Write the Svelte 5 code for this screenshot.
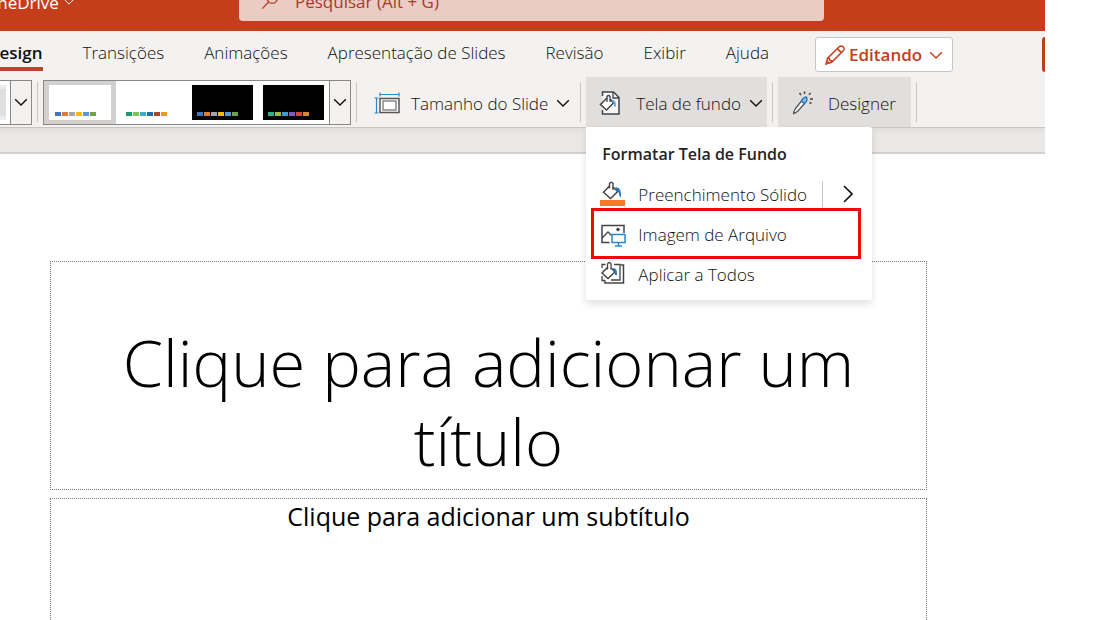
<script lang="ts">
  const tabs = ['Design', 'Transições', 'Animações', 'Apresentação de Slides', 'Revisão', 'Exibir', 'Ajuda'];

  interface Variation {
    name: string;
    dark: boolean;
    colors: string[];
  }

  const office = ['#4472c4', '#e17a35', '#a5a5a5', '#f5b911', '#5b9bd5', '#70a347'];

  const variations: Variation[] = [
    { name: 'Variante 1', dark: false, colors: office },
    { name: 'Variante 2', dark: false, colors: ['#149b6e', '#7fc44a', '#38aecb', '#1d6fa8', '#ab4523', '#ec9c1c'] },
    { name: 'Variante 3', dark: true, colors: office },
    { name: 'Variante 4', dark: true, colors: ['#2bb38a', '#9dbb45', '#3d9cd6', '#7d5cbd', '#c8502c', '#d98a2b'] },
  ];

  let activeTab = $state('Design');
  let selected = $state(0);
  let menuOpen = $state(true);
</script>

{#snippet chevron()}
  <svg class="chevron" viewBox="0 0 14 8" aria-hidden="true">
    <path d="M1.2 1.2 7 7l5.8-5.8" fill="none" stroke="currentColor" stroke-width="1.4" />
  </svg>
{/snippet}

<div class="app">
  <header class="topbar">
    <button class="location" type="button">OneDrive {@render chevron()}</button>
    <label class="search">
      <svg class="search__icon" viewBox="0 0 20 20" aria-hidden="true">
        <circle cx="12.5" cy="7" r="5.6" />
        <path d="M8.5 11.2 1.5 18.5" />
      </svg>
      <input type="text" placeholder="Pesquisar (Alt + G)" aria-label="Pesquisar" />
    </label>
  </header>

  <nav class="tabs">
    {#each tabs as tab}
      <button class="tab" class:tab--active={tab === activeTab} type="button" onclick={() => (activeTab = tab)}>
        {tab}
      </button>
    {/each}
    <button class="editing" type="button">
      <svg class="editing__icon" viewBox="0 0 20 20" aria-hidden="true">
        <path d="M1 19 2.6 13.2 14.2 1.8a2.6 2.6 0 0 1 4 4L6.6 17.3Z" />
        <path d="M12.4 3.6 16.4 7.6M2.6 13.2l1.8.3.4 1.9 1.8.3V17.3M2 16l2 2" />
      </svg>
      Editando
      {@render chevron()}
    </button>
    <button class="share" type="button" aria-label="Compartilhar"></button>
  </nav>

  <div class="toolbar">
    <div class="gallery gallery--themes">
      <button class="theme" type="button" aria-label="Tema"><span></span></button>
      <button class="gallery__more" type="button" aria-label="Mais temas">{@render chevron()}</button>
    </div>
    <span class="separator"></span>
    <div class="gallery">
      {#each variations as variation, i}
        <button
          class="variation"
          class:variation--selected={i === selected}
          class:variation--dark={variation.dark}
          type="button"
          aria-label={variation.name}
          onclick={() => (selected = i)}
        >
          <span class="variation__slide">
            {#each variation.colors as color}
              <i style="background: {color}"></i>
            {/each}
          </span>
        </button>
      {/each}
      <button class="gallery__more" type="button" aria-label="Mais variantes">{@render chevron()}</button>
    </div>
    <span class="separator"></span>
    <button class="tool tool--size" type="button">
      <svg class="tool__icon tool__icon--wide" viewBox="0 0 26 22" aria-hidden="true" fill="none">
        <path d="M6 .5v4M25 .5v4M6 2.5h19M.5 6h4M.5 21h4M2.5 6v15" stroke="#2b88c8" stroke-width="1.2" />
        <rect x="6" y="6.5" width="19" height="14" fill="#fff" stroke="#555" stroke-width="1.5" />
        <rect x="9" y="9" width="13" height="9" stroke="#888" stroke-width="1.5" />
      </svg>
      Tamanho do Slide
      {@render chevron()}
    </button>
    <span class="separator"></span>
    <div class="dropdown">
      <button
        class="tool tool--background"
        type="button"
        aria-expanded={menuOpen}
        onclick={() => (menuOpen = !menuOpen)}
      >
        <svg class="tool__icon" viewBox="0 0 22 24" aria-hidden="true" fill="none">
          <path d="M3.5 5V1h11L20 6.5V23H3.5v-4" fill="#f7f7f7" stroke="#444" stroke-width="1.5" />
          <path d="M14 1v6h6" stroke="#444" stroke-width="1.3" />
          <path d="M8 7 1.5 13.5l6 5.5L14.5 12 11 8" fill="#fff" stroke="#444" stroke-width="1.5" />
          <path d="M8 11V5.5q1.5-2 3 0V11" stroke="#444" stroke-width="1.3" />
          <path d="M13 9.5q3.5.5 3 6" stroke="#69afe5" stroke-width="2" />
        </svg>
        Tela de fundo
        {@render chevron()}
      </button>
      {#if menuOpen}
        <div class="menu">
          <h2>Formatar Tela de Fundo</h2>
          <div class="menu__row">
            <button class="menu__item" type="button">
              <svg viewBox="0 0 26 26" aria-hidden="true" fill="none">
                <path d="M0 19h25v6H0z" fill="#ed7d31" />
                <path d="M9.5 5 3.5 11.2l7 6.3 7.2-7L13 6" fill="#fff" stroke="#444" stroke-width="1.5" />
                <path d="M9.5 7.5v-5q1.7-2.6 3.5 0V9" stroke="#444" stroke-width="1.4" />
                <path d="M15 6.5q6.5-1.5 6 10-2-1-2-3.5t-2.5-4Z" fill="#2878bd" />
              </svg>
              Preenchimento Sólido
            </button>
            <button class="menu__expand" type="button" aria-label="Mais cores">
              <svg viewBox="0 0 10 18" aria-hidden="true">
                <path d="m1 1 8 8-8 8" fill="none" stroke="currentColor" stroke-width="1.6" />
              </svg>
            </button>
          </div>
          <div class="menu__row menu__row--marked">
            <button class="menu__item" type="button">
              <svg viewBox="0 0 26 26" aria-hidden="true" fill="none">
                <path d="M9.5 21.5H2v-17h22V12" stroke="#444" stroke-width="1.5" />
                <path d="m2 17 6-6 3.5 3.5" stroke="#444" stroke-width="1.4" />
                <circle cx="18" cy="8.5" r="1.7" fill="#444" />
                <path d="M12 13.5h13v8H12zM18.5 21.5v3M15 25h7" fill="#fff" stroke="#2b88c8" stroke-width="1.5" />
              </svg>
              Imagem de Arquivo
            </button>
          </div>
          <div class="menu__row">
            <button class="menu__item" type="button">
              <svg viewBox="0 0 26 26" aria-hidden="true" fill="none">
                <path d="M2 7V3.5h3.5M14 3.5h6V19h-9M2 15v4.5h3" stroke="#444" stroke-width="1.3" />
                <path d="M20.5 4h3v18H5v-2.5" stroke="#444" stroke-width="1.5" />
                <path d="M8 6 2 12l6 5.5 7-6.5-4-4" fill="#fff" stroke="#444" stroke-width="1.5" />
                <path d="M7.500 8.500V3q1.800-3 3.600 0v5.500" stroke="#444" stroke-width="1.3" />
                <path d="M13 8q3.500 0 3 6" stroke="#2878bd" stroke-width="2" />
              </svg>
              Aplicar a Todos
            </button>
          </div>
        </div>
      {/if}
    </div>
    <span class="separator"></span>
    <button class="tool tool--designer" type="button">
      <svg class="tool__icon" viewBox="0 0 22 24" aria-hidden="true" fill="none">
        <path d="M1.5 22.5q0-2 2-5l6-7.5 3 2.5L6 20q-2.500 2-4.500 2.500Z" fill="#fff" stroke="#555" stroke-width="1.3" />
        <path d="M9.5 10q1-3.500 5-4 1.500 4-2 6.500Z" fill="#83beec" stroke="#2878bd" stroke-width="1.4" />
        <path d="M12.5.5V3M7.500 2 9 4M18.500 2 17 3.800M18 8h3M17.500 11.500l2 1" stroke="#444" stroke-width="1.5" />
      </svg>
      Designer
    </button>
    <span class="separator"></span>
  </div>

  <div class="gutter"></div>

  <main class="slide">
    <h1 class="placeholder placeholder--title">Clique para adicionar um título</h1>
    <p class="placeholder placeholder--subtitle">Clique para adicionar um subtítulo</p>
  </main>
</div>

<style>
  :global(body) {
    margin: 0;
    background: #fff;
  }

  .app {
    display: flex;
    flex-direction: column;
    box-sizing: border-box;
    height: 100vh;
    padding-right: 5%;
    overflow: hidden;
    font-family: 'Open Sans', 'Noto Sans', sans-serif;
    font-size: 17px;
    font-weight: 300;
    color: #11100f;
  }

  button {
    display: flex;
    align-items: center;
    box-sizing: border-box;
    flex: none;
    margin: 0;
    padding: 0;
    border: 0;
    background: none;
    color: inherit;
    font: inherit;
    white-space: nowrap;
    cursor: pointer;
  }

  svg {
    display: block;
    flex: none;
  }

  .chevron {
    width: 14px;
    height: 8px;
  }

  /* Top bar */
  .topbar {
    display: flex;
    align-items: flex-end;
    flex: none;
    height: 31px;
    background: #c43e1c;
  }

  .location {
    gap: 5px;
    width: 239px;
    height: 42px;
    margin-bottom: 8px;
    margin-left: -16px;
    color: #fff;
    font-weight: 400;
  }

  .location .chevron {
    width: 10px;
  }

  .search {
    display: flex;
    align-items: center;
    gap: 16px;
    box-sizing: border-box;
    width: 56%;
    height: 40px;
    margin-bottom: 10px;
    margin-left: 16px;
    padding: 0 22px;
    border-radius: 4px;
    background: #eaccc5;
  }

  .search__icon {
    width: 18px;
    height: 18px;
    fill: none;
    stroke: #b5402a;
    stroke-width: 1.5;
  }

  .search input {
    flex: 1;
    min-width: 0;
    padding: 0;
    border: 0;
    outline: 0;
    background: none;
    color: #a4373a;
    font: inherit;
    font-weight: 400;
  }

  .search input::placeholder {
    color: #a83a2a;
    opacity: 1;
  }

  /* Tabs */
  .tabs {
    display: flex;
    flex: none;
    gap: 40px;
    height: 46px;
    background: #f3f2f1;
  }

  .tab {
    height: 40px;
    padding-top: 7px;
    border-bottom: 4px solid transparent;
  }

  .tab--active {
    border-bottom-color: #b7472a;
    font-weight: 600;
  }

  .tab:first-child {
    margin-left: -13px;
  }

  .editing {
    gap: 4px;
    height: 35px;
    margin-top: 6px;
    margin-left: 6px;
    padding: 0 9px;
    border: 1px solid #c8c6c4;
    border-radius: 3px;
    background: #fff;
    color: #c43e1c;
    font-weight: 600;
  }

  .editing .chevron {
    margin-left: 3px;
  }

  .editing__icon {
    width: 20px;
    height: 20px;
    fill: none;
    stroke: currentColor;
    stroke-width: 1.5;
  }

  .share {
    width: 3px;
    height: 35px;
    margin-top: 6px;
    margin-left: auto;
    border-radius: 3px 0 0 3px;
    background: #b7401f;
  }

  /* Toolbar */
  .toolbar {
    display: flex;
    align-items: center;
    flex: none;
    height: 50px;
    border-bottom: 1px solid #c8c6c4;
    background: #f3f2f1;
  }

  .separator {
    flex: none;
    width: 1px;
    height: 40px;
    margin: 0 5px;
    background: #c8c6c4;
  }

  .gallery {
    display: flex;
    box-sizing: border-box;
    height: 45px;
    border: 1px solid #8a8886;
    background: #fff;
  }

  .gallery--themes {
    border-left: 0;
  }

  .gallery__more {
    justify-content: center;
    width: 21px;
    border-left: 1px solid #8a8886;
    background: #f3f2f1;
  }

  .theme {
    width: 10px;
  }

  .theme span {
    width: 6px;
    height: 27px;
    border: 1px solid #edebe9;
    border-width: 4px 0;
    background: #e1dfdd;
  }

  .variation {
    justify-content: center;
    width: 71px;
    height: 43px;
  }

  .variation--selected {
    width: 72px;
    border: 4px solid #d2d0ce;
    border-width: 4px 5px;
  }

  .variation__slide {
    display: flex;
    align-items: flex-end;
    gap: 1px;
    box-sizing: border-box;
    width: 61px;
    height: 35px;
    padding: 0 0 4px 5px;
    background: #fff;
  }

  .variation--dark .variation__slide {
    background: #000;
  }

  .variation__slide i {
    width: 6px;
    height: 4px;
  }

  .tool {
    height: 50px;
    padding-top: 2px;
  }

  .tool__icon {
    width: 22px;
    height: 24px;
  }

  .tool__icon--wide {
    width: 26px;
    height: 22px;
  }

  .tool--size {
    gap: 11px;
    padding-right: 5px;
    padding-left: 12px;
  }

  .tool .chevron {
    margin-left: -3px;
  }

  .tool--background {
    gap: 15px;
    padding-right: 4px;
    padding-left: 13px;
    background: #e1dfdd;
  }

  .tool--background .chevron {
    margin-left: -7px;
  }

  .tool--designer {
    gap: 14px;
    padding-right: 15px;
    padding-left: 14px;
    background: #e1dfdd;
  }

  /* Background menu */
  .dropdown {
    position: relative;
    flex: none;
  }

  .menu {
    position: absolute;
    z-index: 1;
    top: 100%;
    left: 0;
    box-sizing: border-box;
    width: 286px;
    padding: 8px 0 6px;
    border-radius: 0 2px 2px 2px;
    background: #fff;
    box-shadow: 0 4px 8px rgb(0 0 0 / 12%);
  }

  .menu h2 {
    margin: 0 16px;
    font-size: 16px;
    font-weight: 600;
    line-height: 39px;
    color: #252423;
  }

  .menu__row {
    position: relative;
    display: flex;
    align-items: center;
    height: 40px;
  }

  .menu__row--marked::after {
    content: '';
    position: absolute;
    inset: -6px 11px -5px 5px;
    border: 3px solid #e80c0c;
    pointer-events: none;
  }

  .menu__item {
    flex: 1;
    gap: 12px;
    height: 40px;
    padding-left: 14px;
  }

  .menu__item svg {
    width: 26px;
    height: 26px;
  }

  .menu__expand {
    justify-content: center;
    width: 50px;
    height: 26px;
    border-left: 1px solid #c8c6c4;
  }

  .menu__expand svg {
    width: 10px;
    height: 18px;
  }

  .gutter {
    flex: none;
    height: 24px;
    border-bottom: 2px solid #d2d0ce;
    background: linear-gradient(#e1dfdd, #eae9e8 6px);
  }

  /* Slide */
  .slide {
    display: flex;
    flex: 1;
    flex-direction: column;
    gap: 8px;
    min-height: 0;
    padding: 107px 118px 0 50px;
    background: #fff;
    color: #000;
    text-align: center;
  }

  .placeholder {
    box-sizing: border-box;
    margin: 0;
    border: 1px dotted #767676;
  }

  .placeholder--title {
    display: flex;
    align-items: flex-end;
    justify-content: center;
    flex: none;
    height: 229px;
    padding: 0 56px 8px;
    font-size: 65px;
    font-weight: 300;
    line-height: 79px;
  }

  .placeholder--subtitle {
    flex: none;
    height: 180px;
    font-size: 25px;
    font-weight: 400;
    line-height: 34px;
  }
</style>
